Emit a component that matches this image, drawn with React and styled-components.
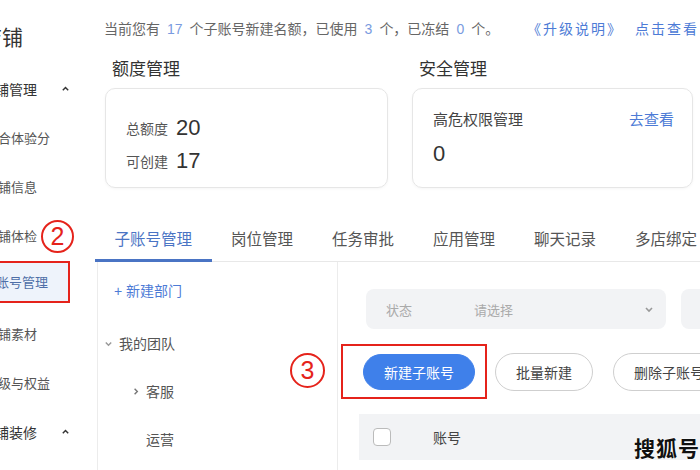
import React from "react";
import styled, { createGlobalStyle } from "styled-components";

const GlobalStyle = createGlobalStyle`
  html, body {
    margin: 0;
    padding: 0;
    background: #fff;
  }
  body {
    font-family: "Liberation Sans", "Noto Sans CJK SC", sans-serif;
    color: #333;
  }
`;

const Page = styled.div`
  position: relative;
  display: flex;
  width: 700px;
  height: 470px;
  overflow: hidden;
  background: #fff;
`;

// 左側選單，左邊被截掉一段
const Sidebar = styled.div`
  flex: 0 0 125px;
  margin-left: -28px;
  display: flex;
  flex-direction: column;
`;

const ShopTitle = styled.div`
  padding: 24px 0 0 9px;
  font-size: 21px;
  line-height: 28px;
  color: #333;
  margin-bottom: 12px;
`;

const MenuRow = styled.div`
  height: 49px;
  display: flex;
  align-items: center;
  font-size: ${(p) => (p.group ? "14px" : "13px")};
  color: ${(p) => (p.group ? "#333" : "#555")};
  padding-left: ${(p) => (p.group ? "9px" : "0")};
`;

const MenuItem = styled.div`
  display: flex;
  align-items: center;
  height: 42px;
  width: 100%;
  padding-left: 13px;
  box-sizing: border-box;
  ${(p) =>
    p.active &&
    `
    background: #eef3fb;
    color: #4f6fa8;
    border: 2px solid #e5231b;
    border-left: none;
    padding-left: 11px;
    width: 98px;
    margin-top: -6px;
  `}
`;

const Caret = styled.span`
  display: inline-flex;
  margin-left: 24px;
`;

const Main = styled.div`
  flex: 1;
  display: flex;
  flex-direction: column;
  min-width: 0;
`;

const Notice = styled.div`
  margin-top: 19px;
  padding: 0 3px 0 7px;
  font-size: 14px;
  line-height: 20px;
  color: #666;
  white-space: nowrap;
  display: flex;
`;

const Num = styled.span`
  color: #7a9be0;
  padding: 0 7px;
`;

const NoticeLink = styled.span`
  color: #4d7bd6;
  margin-left: auto;
  letter-spacing: 2px;
  margin-right: -2px;
`;

const LinkPart = styled.span`
  margin-left: 12px;
`;

const Overview = styled.div`
  display: flex;
  gap: 24px;
  padding-left: 8px;
  margin-top: 19px;
`;

const Section = styled.div`
  width: ${(p) => p.w}px;
`;

const SectionTitle = styled.div`
  font-size: 17px;
  line-height: 24px;
  padding-left: 7px;
  margin-bottom: 6px;
  color: #333;
`;

const Card = styled.div`
  height: 100px;
  box-sizing: border-box;
  border: 1px solid #e6e6e6;
  border-radius: 10px;
  box-shadow: 0 1px 3px rgba(0, 0, 0, 0.04);
  padding: ${(p) => p.pad};
`;

const QuotaRow = styled.div`
  display: flex;
  align-items: center;
  height: 33px;
  font-size: 14px;
  color: #555;
`;

const BigNum = styled.span`
  font-size: 22px;
  color: #333;
  margin-left: 8px;
`;

const CardHead = styled.div`
  display: flex;
  justify-content: space-between;
  align-items: center;
  height: 24px;
  font-size: 15px;
  color: #444;
`;

const LinkText = styled.span`
  color: #4d7bd6;
`;

const RiskNum = styled.div`
  margin-top: 9px;
  font-size: 22px;
  line-height: 30px;
  color: #333;
`;

const Tabs = styled.div`
  display: flex;
  margin-top: 28px;
  margin-left: -2px;
  border-bottom: 1px solid #e8e8e8;
`;

const Tab = styled.div`
  height: 43px;
  padding: 0 19.5px;
  display: flex;
  align-items: center;
  font-size: 15.5px;
  white-space: nowrap;
  color: ${(p) => (p.active ? "#4a74c4" : "#555")};
  border-bottom: 3px solid ${(p) => (p.active ? "#4a74c4" : "transparent")};
  margin-bottom: -1px;
`;

const Body = styled.div`
  flex: 1;
  display: flex;
`;

const DeptPanel = styled.div`
  flex: 0 0 239px;
  border-left: 1px solid #ececec;
  border-right: 1px solid #ececec;
  padding-top: 4px;
`;

const TreeRow = styled.div`
  height: 48px;
  display: flex;
  align-items: center;
  font-size: 14px;
  color: ${(p) => (p.blue ? "#4d7bd6" : "#555")};
  padding-left: ${(p) => p.indent}px;
  margin-bottom: ${(p) => (p.gap ? "5px" : "0")};
  gap: 6px;
`;

const ListPanel = styled.div`
  flex: 1;
  padding: 27px 0 0 28px;
  min-width: 0;
`;

const Filters = styled.div`
  display: flex;
  gap: 15px;
`;

const SelectBox = styled.div`
  flex: 0 0 ${(p) => p.w}px;
  height: 40px;
  border-radius: 8px;
  background: #f2f3f5;
  display: flex;
  align-items: center;
  padding: 0 12px 0 20px;
  box-sizing: border-box;
  font-size: 13px;
  color: #aaa;
`;

const SelectLabel = styled.span`
  width: 88px;
`;

const SelectValue = styled.span`
  flex: 1;
`;

const Actions = styled.div`
  display: flex;
  align-items: center;
  margin-top: 15px;
  margin-left: -25px;
`;

const Highlight = styled.div`
  border: 2px solid #e5231b;
  padding: 8px 10px 7px 20px;
`;

const Button = styled.button`
  height: ${(p) => (p.primary ? "36px" : "38px")};
  padding: 0 20px;
  border-radius: 19px;
  font-family: inherit;
  font-size: 14px;
  white-space: nowrap;
  border: 1px solid ${(p) => (p.primary ? "#3f80ea" : "#cfcfcf")};
  background: ${(p) => (p.primary ? "#3f80ea" : "#fff")};
  color: ${(p) => (p.primary ? "#fff" : "#444")};
  margin-left: ${(p) => p.ml || 0}px;
`;

const TableHead = styled.div`
  margin-top: 15px;
  margin-left: -7px;
  height: 46px;
  background: #f2f3f5;
  display: flex;
  align-items: center;
  padding-left: 14px;
  font-size: 14px;
  color: #444;
`;

const Check = styled.span`
  width: 16px;
  height: 16px;
  border: 1px solid #bbb;
  border-radius: 4px;
  background: #fff;
  margin-right: 42px;
`;

// 紅色圈圈註記，蓋在畫面上
const Marker = styled.div`
  position: absolute;
  left: ${(p) => p.x}px;
  top: ${(p) => p.y}px;
  width: ${(p) => p.size}px;
  height: ${(p) => p.size}px;
  box-sizing: border-box;
  border: 2.5px solid #e5231b;
  border-radius: 50%;
  color: #e5231b;
  font-size: 25px;
  font-family: "Liberation Sans", sans-serif;
  display: flex;
  align-items: center;
  justify-content: center;
  line-height: 1;
  background: #fff;
`;

const Watermark = styled.div`
  position: absolute;
  right: 0;
  bottom: 8px;
  font-size: 21px;
  font-weight: bold;
  color: #111;
  font-family: "Noto Sans CJK SC", sans-serif;
  letter-spacing: 1px;
  text-shadow: 0 0 2px #fff, 0 0 2px #fff;
`;

function Chevron({ dir = "down", color = "#888", size = 10 }) {
  const paths = {
    up: "M2 7 L5 4 L8 7",
    down: "M2 4 L5 7 L8 4",
    right: "M4 2 L7 5 L4 8",
  };
  return (
    <svg width={size} height={size} viewBox="0 0 10 10">
      <path d={paths[dir]} fill="none" stroke={color} strokeWidth="1.6" />
    </svg>
  );
}

const tabs = ["子账号管理", "岗位管理", "任务审批", "应用管理", "聊天记录", "多店绑定"];

function App() {
  return (
    <Page>
      <GlobalStyle />
      <Sidebar>
        <ShopTitle>店铺</ShopTitle>
        <MenuRow group>
          店铺管理
          <Caret>
            <Chevron dir="up" color="#333" size={9} />
          </Caret>
        </MenuRow>
        <MenuRow>
          <MenuItem>综合体验分</MenuItem>
        </MenuRow>
        <MenuRow>
          <MenuItem>店铺信息</MenuItem>
        </MenuRow>
        <MenuRow>
          <MenuItem>店铺体检</MenuItem>
        </MenuRow>
        <MenuRow>
          <MenuItem active>子账号管理</MenuItem>
        </MenuRow>
        <MenuRow>
          <MenuItem>店铺素材</MenuItem>
        </MenuRow>
        <MenuRow>
          <MenuItem>等级与权益</MenuItem>
        </MenuRow>
        <MenuRow group>
          店铺装修
          <Caret>
            <Chevron dir="up" color="#333" size={9} />
          </Caret>
        </MenuRow>
      </Sidebar>

      <Main>
        <Notice>
          当前您有<Num>17</Num>个子账号新建名额，已使用<Num>3</Num>个，已冻结
          <Num>0</Num>个。
          <NoticeLink>
            《升级说明》<LinkPart>点击查看</LinkPart>
          </NoticeLink>
        </Notice>

        <Overview>
          <Section w={283}>
            <SectionTitle>额度管理</SectionTitle>
            <Card pad="22px 20px 0">
              <QuotaRow>
                总额度<BigNum>20</BigNum>
              </QuotaRow>
              <QuotaRow>
                可创建<BigNum>17</BigNum>
              </QuotaRow>
            </Card>
          </Section>
          <Section w={281}>
            <SectionTitle>安全管理</SectionTitle>
            <Card pad="17px 18px 0 20px">
              <CardHead>
                高危权限管理
                <LinkText>去查看</LinkText>
              </CardHead>
              <RiskNum>0</RiskNum>
            </Card>
          </Section>
        </Overview>

        <Tabs>
          {tabs.map((t, i) => (
            <Tab key={t} active={i === 0}>
              {t}
            </Tab>
          ))}
        </Tabs>

        <Body>
          <DeptPanel>
            <TreeRow blue indent={16} gap>
              + 新建部门
            </TreeRow>
            <TreeRow indent={6}>
              <Chevron dir="down" color="#999" size={9} />
              我的团队
            </TreeRow>
            <TreeRow indent={33}>
              <Chevron dir="right" color="#777" size={9} />
              客服
            </TreeRow>
            <TreeRow indent={48}>运营</TreeRow>
          </DeptPanel>

          <ListPanel>
            <Filters>
              <SelectBox w={300}>
                <SelectLabel>状态</SelectLabel>
                <SelectValue>请选择</SelectValue>
                <Chevron dir="down" color="#999" size={10} />
              </SelectBox>
              <SelectBox w={80} />
            </Filters>

            <Actions>
              <Highlight>
                <Button primary>新建子账号</Button>
              </Highlight>
              <Button ml={8}>批量新建</Button>
              <Button ml={20}>删除子账号</Button>
            </Actions>

            <TableHead>
              <Check />
              账号
            </TableHead>
          </ListPanel>
        </Body>
      </Main>

      <Marker x={41} y={220} size={33}>2</Marker>
      <Marker x={290} y={353} size={35}>3</Marker>
      <Watermark>搜狐号</Watermark>
    </Page>
  );
}

export default App;
